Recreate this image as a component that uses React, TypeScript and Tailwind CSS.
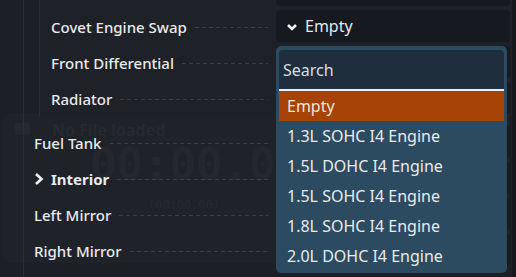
import React from "react";

const dash =
  "flex-1 h-px mx-[8px] bg-[linear-gradient(to_right,#3b3e45_4px,transparent_4px)] bg-[length:7px_1px]";

function Row({
  label,
  bold,
  chevron,
  value,
}: {
  label: string;
  bold?: boolean;
  chevron?: boolean;
  value?: string;
}) {
  return (
    <div className="flex h-[36px] items-center">
      {chevron && (
        <svg width="10" height="14" viewBox="0 0 10 14" className="mr-[7px] text-[#f2f2f2]">
          <path d="M2 2 L7.5 7 L2 12" fill="none" stroke="currentColor" strokeWidth="2.6" />
        </svg>
      )}
      <span
        className={`text-[15px] leading-none text-[#e9eaec] whitespace-nowrap ${
          bold ? "font-bold" : "font-medium"
        }`}
      >
        {label}
      </span>
      <div className={dash} />
      <div className="w-[234px] h-[32px] -mt-[2px] rounded-[4px] bg-[#16191f] shrink-0 flex items-center pl-[10px] text-[#e6e8ea]">
        {value && (
          <>
            <svg width="12" height="10" viewBox="0 0 12 10" className="mr-[7px] mt-[2px]">
              <path d="M2 3 L6 7 L10 3" fill="none" stroke="#f0f0f0" strokeWidth="2.6" />
            </svg>
            <span className="text-[16px] leading-none">{value}</span>
          </>
        )}
      </div>
    </div>
  );
}

export default function App() {
  const items = [
    "1.3L SOHC I4 Engine",
    "1.5L DOHC I4 Engine",
    "1.5L SOHC I4 Engine",
    "1.8L SOHC I4 Engine",
    "2.0L DOHC I4 Engine",
  ];
  return (
    <div
      className="relative w-[516px] h-[277px] overflow-hidden bg-[#1c1f26]"
      style={{ fontFamily: '"Noto Sans", sans-serif' }}
    >
      {/* ghost background layer (dimmed app behind the panel) */}
      <div className="absolute inset-0">
        <div className="absolute left-[2px] top-[113px] w-[320px] h-[150px] rounded-[10px] bg-[#1f2229]" />
        <div className="absolute left-[15px] top-[123px] w-[15px] h-[12px] rounded-[2px] bg-[#25282f]" />
        <div className="absolute left-[52px] top-[118px] text-[16px] font-bold text-[#262930] whitespace-nowrap">
          No File loaded
        </div>
        <div
          className="absolute left-[90px] top-[132px] text-[44px] font-bold text-[#24272e] whitespace-nowrap"
          style={{ fontFamily: '"DejaVu Sans Mono", monospace' }}
        >
          00:00.00
        </div>
        <div
          className="absolute left-[148px] top-[196px] text-[12px] text-[#272a31] whitespace-nowrap"
          style={{ fontFamily: '"DejaVu Sans Mono", monospace' }}
        >
          (00:00.00)
        </div>
      </div>

      <div className="relative flex h-full">
        <div className="w-[23px] shrink-0" />
        <div className="flex-1 border-l border-[#2b2e35] pl-[10px] pr-[6px] -mt-[27px]">
          <div className="ml-[5px] -mr-[6px] pr-[6px] pl-[11px] bg-[#1f2228]/80 border-l border-[#2a2d33]">
            <Row label="Covet Engine" />
            <Row label="Covet Engine Swap" value="Empty" />
            <Row label="Front Differential" />
            <Row label="Radiator" />
          </div>
          <div className="mt-[8px]">
            <Row label="Fuel Tank" />
            <Row label="Interior" bold chevron />
            <Row label="Left Mirror" />
            <Row label="Right Mirror" />
          </div>
        </div>
      </div>

      {/* dropdown menu */}
      <div className="absolute left-[276px] top-[46px] w-[231px] rounded-[5px] bg-[#2c4a60] px-[3px] pt-[4px] pb-[2px]">
        <div className="h-[41px] rounded-t-[4px] bg-[#1f2e3d] border-b-2 border-[#eceff1] flex items-center pl-[4px]">
          <span className="text-[16px] text-[#d9dee3]">Search</span>
        </div>
        <div className="h-[30px] bg-[#a64305] flex items-center pl-[8px] text-[16px] text-[#f0e6df]">
          Empty
        </div>
        {items.map((t) => (
          <div key={t} className="h-[30px] flex items-center pl-[8px] text-[16px] text-[#e8ebee]">
            {t}
          </div>
        ))}
      </div>

      {/* right scroll strip */}
      <div className="absolute right-0 top-0 w-[4px] h-full bg-[#15171c]" />
    </div>
  );
}
